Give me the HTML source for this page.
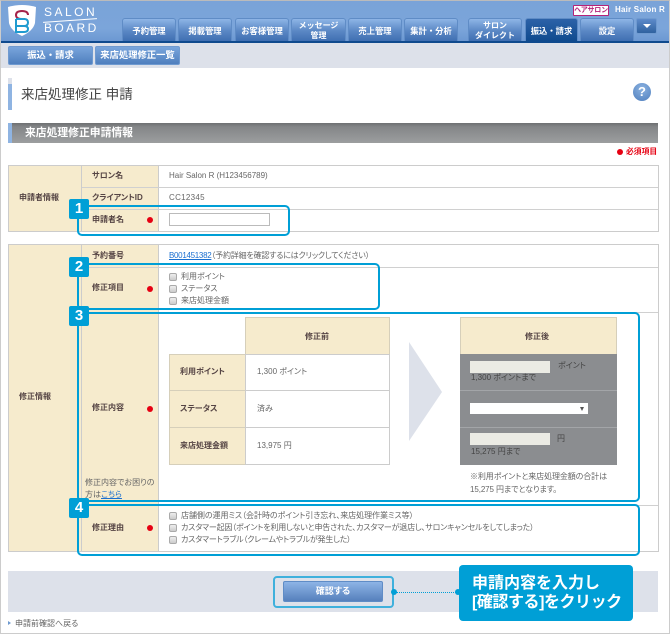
<!DOCTYPE html>
<html lang="ja"><head><meta charset="utf-8"><title>来店処理修正 申請</title>
<style>
html,body{margin:0;padding:0}
*{box-sizing:border-box}
body{width:670px;height:634px;position:relative;overflow:hidden;background:#fff;font-family:"Liberation Sans","Noto Sans CJK JP",sans-serif;font-size:8px;color:#666;font-feature-settings:"palt"}
.a{position:absolute}
.t{position:absolute;white-space:nowrap;line-height:12px}
.tab{position:absolute;top:18px;height:23px;border:1px solid #5f8cc6;border-bottom:0;border-radius:3px 3px 0 0;background:linear-gradient(#8eb5e6,#5a87c4 55%,#3f6fb2);color:#fff;font-size:8.3px;font-weight:bold;text-align:center;line-height:10px;display:flex;align-items:center;justify-content:center;padding-top:2px;font-feature-settings:normal;white-space:nowrap}
.sub{position:absolute;top:46px;height:19px;border:1px solid #6f9ad0;border-radius:2px;background:linear-gradient(#79a5dc,#4f7fbe);color:#fff;font-weight:bold;font-size:9.3px;line-height:17px;text-align:center;font-feature-settings:normal;white-space:nowrap}
.box{position:absolute;background:#fff;border:1px solid #ccc}
.lab{position:absolute;background:#f6ebcd;border-right:1px solid #ccc}
.hr{position:absolute;height:1px;background:#d0d0d0}
.b{font-weight:bold;color:#544}
.dot{position:absolute;width:6px;height:6px;border-radius:50%;background:#e60012}
.hl{position:absolute;border:2px solid #009fd6;border-radius:5px}
.bd{position:absolute;left:69px;width:20px;height:20px;background:#009fd6;border-radius:2px;color:#fff;font-weight:bold;font-size:15px;line-height:20px;text-align:center}
.cb{position:absolute;left:169px;width:8px;height:8px;border:1px solid #aaa;border-radius:2px;background:linear-gradient(#eee,#ccc)}
.c{position:absolute;border:1px solid #ccc;background:#fff}
.h{background:#f6ebcd;border-color:#d6cfba}
</style></head><body>
<div class="a" style="left:0;top:0;width:670px;height:634px;border:1px solid #ccc;border-top-color:#bbb"></div>

<!-- header -->
<div class="a" style="left:1px;top:1px;width:668px;height:40px;background:linear-gradient(#7aa3d8,#7ba5da 70%,#6c98d2)"></div>
<div class="a" style="left:1px;top:41px;width:668px;height:2px;background:#0f4a8e"></div>
<div class="a" style="left:1px;top:43px;width:668px;height:25px;background:#dde1ea"></div>
<svg class="a" style="left:7px;top:4px" width="30" height="33" viewBox="0 0 30 33">
<path d="M1 3 Q15 -1 29 3 L28 19 Q26 27 15 32 Q4 27 2 19Z" fill="#fff"/>
<path d="M21 11 Q21 7 15 7 Q9 7 9 11 Q9 15 15 15 H18" fill="none" stroke="#a5234a" stroke-width="2"/>
<path d="M9 15 H17 Q21 15 21 18.5 Q21 22 17 22 H9 M17 22 Q21 22 21 25 Q21 28 17 28 H9 V15" fill="none" stroke="#1f9bd0" stroke-width="2"/>
</svg>
<div class="t" style="left:44px;top:6px;font-size:12px;letter-spacing:2.5px;color:#fff;line-height:13px">SALON</div>
<div class="a" style="left:43px;top:20px;width:54px;height:1px;background:#fff;transform:rotate(-4deg)"></div>
<div class="t" style="left:44px;top:22px;font-size:12px;letter-spacing:2.4px;color:#fff;line-height:13px">BOARD</div>

<div class="tab" style="left:122px;width:54px">予約管理</div>
<div class="tab" style="left:178px;width:54px">掲載管理</div>
<div class="tab" style="left:235px;width:54px">お客様管理</div>
<div class="tab" style="left:291px;width:55px;font-size:8px">メッセージ<br>管理</div>
<div class="tab" style="left:348px;width:54px">売上管理</div>
<div class="tab" style="left:404px;width:54px">集計・分析</div>
<div class="tab" style="left:468px;width:54px;font-size:8px">サロン<br>ダイレクト</div>
<div class="tab" style="left:525px;width:53px;background:linear-gradient(#2c62a8,#0f4a8e)">振込・請求</div>
<div class="tab" style="left:580px;width:54px">設定</div>
<div class="a" style="left:636px;top:18px;width:21px;height:16px;border:1px solid #6f9ad0;border-radius:2px;background:linear-gradient(#5d8aca,#2f629f)"></div>
<div class="a" style="left:643px;top:24px;width:0;height:0;border-left:4px solid transparent;border-right:4px solid transparent;border-top:4px solid #fff"></div>
<div class="a" style="left:573px;top:5px;width:36px;height:11px;background:#fff;border:1px solid #b5237a;border-radius:1px;color:#b5237a;font-size:7px;font-weight:bold;line-height:9px;text-align:center;white-space:nowrap">ヘアサロン</div>
<div class="t" style="left:615px;top:4px;color:#fff;font-weight:bold;font-size:8px;letter-spacing:.2px">Hair Salon R</div>

<div class="sub" style="left:8px;width:85px">振込・請求</div>
<div class="sub" style="left:95px;width:85px">来店処理修正一覧</div>

<!-- title -->
<div class="a" style="left:8px;top:78px;width:4px;height:6px;background:#dde1ea"></div>
<div class="a" style="left:8px;top:84px;width:4px;height:26px;background:#8fb4e2"></div>
<div class="t" style="left:21px;top:87px;font-size:13.5px;line-height:16px;color:#444;font-feature-settings:normal">来店処理修正 申請</div>
<div class="a" style="left:633px;top:83px;width:18px;height:18px;border-radius:50%;background:radial-gradient(circle at 50% 30%,#8bb2e0,#4f7fbe);color:#fff;font-weight:bold;font-size:13px;line-height:18px;text-align:center">?</div>

<!-- section -->
<div class="a" style="left:8px;top:123px;width:650px;height:20px;background:linear-gradient(#6e7072,#848688 20%,#9c9e9f)"></div>
<div class="a" style="left:8px;top:123px;width:4px;height:20px;background:#8fb4e2"></div>
<div class="t" style="left:25px;top:127px;font-size:10.8px;font-weight:bold;color:#fff;font-feature-settings:normal">来店処理修正申請情報</div>
<div class="dot" style="left:617px;top:149px"></div>
<div class="t" style="left:626px;top:146px;font-size:7.8px;font-weight:bold;color:#e60012">必須項目</div>

<!-- table 1 -->
<div class="box" style="left:8px;top:165px;width:651px;height:67px"></div>
<div class="lab" style="left:9px;top:166px;width:73px;height:65px"></div>
<div class="lab" style="left:82px;top:166px;width:77px;height:65px"></div>
<div class="hr" style="left:82px;top:187px;width:576px"></div>
<div class="hr" style="left:82px;top:209px;width:576px"></div>
<div class="t b" style="left:19px;top:192px">申請者情報</div>
<div class="t b" style="left:92px;top:170px">サロン名</div>
<div class="t" style="left:169px;top:170px;font-size:8px">Hair Salon R (H123456789)</div>
<div class="t b" style="left:92px;top:192px">クライアントID</div>
<div class="t" style="left:169px;top:192px;font-size:8px;letter-spacing:.3px">CC12345</div>
<div class="t b" style="left:92px;top:214px">申請者名</div>
<div class="dot" style="left:147px;top:217px"></div>
<div class="a" style="left:169px;top:213px;width:101px;height:13px;background:#fff;border:1px solid #bbb"></div>

<!-- table 2 -->
<div class="box" style="left:8px;top:244px;width:651px;height:308px"></div>
<div class="lab" style="left:9px;top:245px;width:73px;height:306px"></div>
<div class="lab" style="left:82px;top:245px;width:77px;height:306px"></div>
<div class="hr" style="left:82px;top:267px;width:576px"></div>
<div class="hr" style="left:82px;top:312px;width:576px"></div>
<div class="hr" style="left:82px;top:505px;width:576px"></div>
<div class="t b" style="left:19px;top:391px">修正情報</div>
<div class="t b" style="left:92px;top:250px">予約番号</div>
<div class="t" style="left:169px;top:250px;letter-spacing:-.2px"><span style="color:#1a6fd0;text-decoration:underline;letter-spacing:-.3px">B001451382</span>（予約詳細を確認するにはクリックしてください）</div>
<div class="t b" style="left:92px;top:282px">修正項目</div>
<div class="dot" style="left:147px;top:286px"></div>
<div class="cb" style="top:273px"></div><div class="t" style="left:181px;top:271px">利用ポイント</div>
<div class="cb" style="top:285px"></div><div class="t" style="left:181px;top:283px">ステータス</div>
<div class="cb" style="top:297px"></div><div class="t" style="left:181px;top:295px">来店処理金額</div>

<div class="t b" style="left:92px;top:402px">修正内容</div>
<div class="dot" style="left:147px;top:406px"></div>
<div class="t" style="left:85px;top:477px;line-height:12px">修正内容でお困りの<br>方は<span style="color:#1a6fd0;text-decoration:underline">こちら</span></div>

<div class="t b" style="left:92px;top:522px">修正理由</div>
<div class="dot" style="left:147px;top:525px"></div>
<div class="cb" style="top:512px"></div><div class="t" style="left:181px;top:510px;letter-spacing:-.05px">店舗側の運用ミス（会計時のポイント引き忘れ、来店処理作業ミス等）</div>
<div class="cb" style="top:524px"></div><div class="t" style="left:181px;top:522px;letter-spacing:-.2px">カスタマー起因（ポイントを利用しないと申告された、カスタマーが退店し、サロンキャンセルをしてしまった）</div>
<div class="cb" style="top:536px"></div><div class="t" style="left:181px;top:534px;letter-spacing:-.2px">カスタマートラブル（クレームやトラブルが発生した）</div>

<!-- before table -->
<div class="c h" style="left:245px;top:317px;width:145px;height:38px"></div>
<div class="t b" style="left:305px;top:331px">修正前</div>
<div class="c h" style="left:169px;top:354px;width:77px;height:37px"></div>
<div class="c h" style="left:169px;top:390px;width:77px;height:38px"></div>
<div class="c h" style="left:169px;top:427px;width:77px;height:38px"></div>
<div class="c" style="left:245px;top:354px;width:145px;height:37px"></div>
<div class="c" style="left:245px;top:390px;width:145px;height:38px"></div>
<div class="c" style="left:245px;top:427px;width:145px;height:38px"></div>
<div class="t b" style="left:180px;top:366px">利用ポイント</div>
<div class="t b" style="left:180px;top:403px">ステータス</div>
<div class="t b" style="left:180px;top:440px">来店処理金額</div>
<div class="t" style="left:257px;top:366px">1,300 ポイント</div>
<div class="t" style="left:257px;top:403px">済み</div>
<div class="t" style="left:257px;top:440px">13,975 円</div>

<svg class="a" style="left:409px;top:342px" width="34" height="100"><path d="M0 0 L33 50 L0 99Z" fill="#dde1ea"/></svg>

<!-- after table -->
<div class="c h" style="left:460px;top:317px;width:157px;height:38px"></div>
<div class="t b" style="left:525px;top:331px">修正後</div>
<div class="a" style="left:460px;top:354px;width:157px;height:111px;background:#8b8d90"></div>
<div class="a" style="left:460px;top:390px;width:157px;height:1px;background:#a3a5a8"></div>
<div class="a" style="left:460px;top:427px;width:157px;height:1px;background:#a3a5a8"></div>
<div class="a" style="left:470px;top:361px;width:80px;height:12px;background:#ebebe4"></div>
<div class="t" style="left:558px;top:360px;color:#444">ポイント</div>
<div class="t" style="left:471px;top:372px;color:#444">1,300 ポイントまで</div>
<div class="a" style="left:470px;top:403px;width:118px;height:11px;background:#fff"></div>
<div class="a" style="left:580px;top:407px;width:0;height:0;border-left:2.5px solid transparent;border-right:2.5px solid transparent;border-top:4px solid #555"></div>
<div class="a" style="left:470px;top:433px;width:80px;height:12px;background:#ebebe4"></div>
<div class="t" style="left:557px;top:433px;color:#444">円</div>
<div class="t" style="left:471px;top:446px;color:#444">15,275 円まで</div>
<div class="t" style="left:470px;top:470px;line-height:13px;letter-spacing:-.1px">※利用ポイントと来店処理金額の合計は<br>15,275 円までとなります。</div>

<!-- footer -->
<div class="a" style="left:8px;top:571px;width:650px;height:41px;background:#dde1ea"></div>
<div class="a" style="left:283px;top:581px;width:100px;height:21px;border:1px solid #5f8cc6;border-radius:2px;background:linear-gradient(#8db4e6,#5680bc);color:#fff;font-weight:bold;font-size:9px;line-height:19px;text-align:center">確認する</div>
<div class="a" style="left:8px;top:621px;width:0;height:0;border-top:2.5px solid transparent;border-bottom:2.5px solid transparent;border-left:3px solid #6f9ad0"></div>
<div class="t" style="left:15px;top:618px">申請前確認へ戻る</div>

<!-- highlights -->
<div class="hl" style="left:77px;top:205px;width:213px;height:31px"></div>
<div class="hl" style="left:77px;top:263px;width:303px;height:47px"></div>
<div class="hl" style="left:77px;top:312px;width:563px;height:190px"></div>
<div class="hl" style="left:77px;top:504px;width:563px;height:52px"></div>
<div class="bd" style="top:199px">1</div>
<div class="bd" style="top:257px">2</div>
<div class="bd" style="top:306px">3</div>
<div class="bd" style="top:498px">4</div>
<div class="a" style="left:273px;top:576px;width:121px;height:32px;border:2px solid #3fb0dc;border-radius:4px"></div>
<div class="a" style="left:391px;top:589px;width:6px;height:6px;border-radius:50%;background:#009fd6"></div>
<div class="a" style="left:396px;top:591.5px;width:62px;height:0;border-top:1px dotted #009fd6"></div>
<div class="a" style="left:455px;top:589px;width:6px;height:6px;border-radius:50%;background:#009fd6"></div>
<div class="a" style="left:459px;top:565px;width:174px;height:56px;background:#009fd6;border-radius:4px"></div>
<div class="t" style="left:472px;top:574px;font-size:16px;font-weight:bold;color:#fff;line-height:19px;font-feature-settings:normal">申請内容を入力し<br><span style="letter-spacing:-.45px">[確認する]をクリック</span></div>
</body></html>
